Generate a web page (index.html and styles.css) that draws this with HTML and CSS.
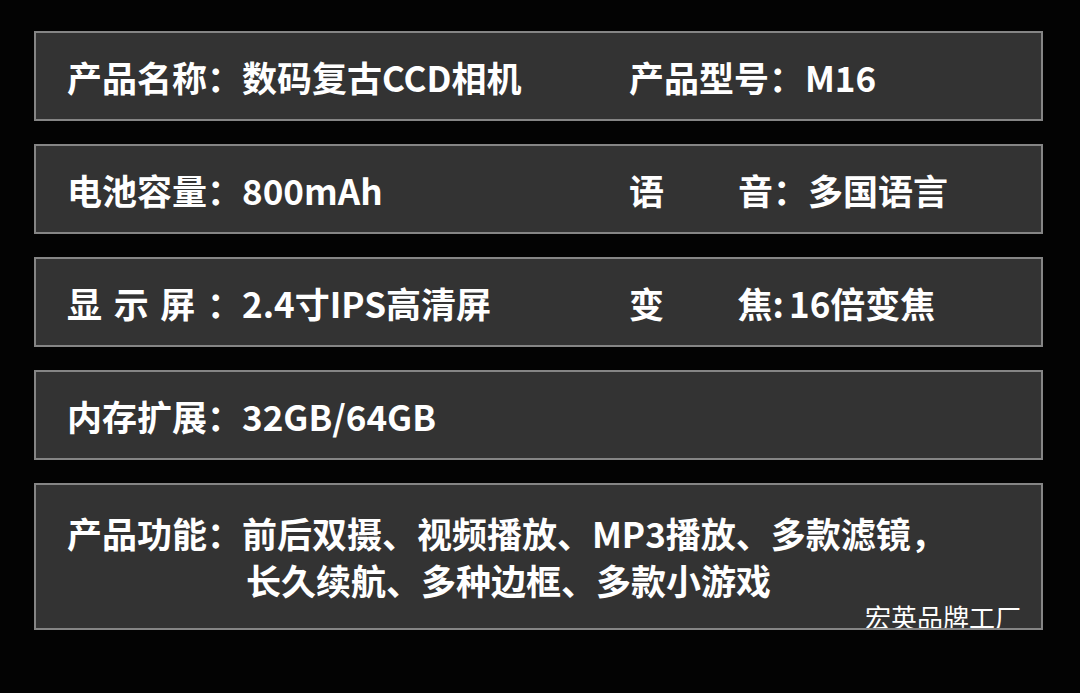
FILE: index.html
```html
<!DOCTYPE html>
<html>
<head>
    <meta charset="utf-8">
    <title>数码复古CCD相机 产品参数</title>
    <link rel="stylesheet" href="styles.css">
</head>
<body>
    <div class="spec-list">
        <div class="spec-row">
            <div class="cell cell-first">
                <span class="label">产品名称：</span>
                <span class="value">数码复古CCD相机</span>
            </div>
            <div class="cell">
                <span class="label">产品型号：</span>
                <span class="value value-latin">M16</span>
            </div>
        </div>

        <div class="spec-row">
            <div class="cell cell-first">
                <span class="label">电池容量：</span>
                <span class="value">800mAh</span>
            </div>
            <div class="cell">
                <span class="label label-split label-wide"><span>语</span><span>音：</span></span>
                <span class="value">多国语言</span>
            </div>
        </div>

        <div class="spec-row">
            <div class="cell cell-first">
                <span class="label label-spaced">显 示 屏 ：</span>
                <span class="value">2.4寸IPS高清屏</span>
            </div>
            <div class="cell">
                <span class="label label-split label-zoom"><span>变</span><span>焦:</span></span>
                <span class="value value-zoom">16倍变焦</span>
            </div>
        </div>

        <div class="spec-row">
            <div class="cell cell-first">
                <span class="label">内存扩展：</span>
                <span class="value">32GB/64GB</span>
            </div>
        </div>

        <div class="spec-row spec-row-tall">
            <div class="cell cell-multi">
                <span class="label">产品功能：</span>
                <div class="value">
                    <span class="line">前后双摄、视频播放、MP3播放、多款滤镜，</span>
                    <span class="line line-indent">长久续航、多种边框、多款小游戏</span>
                </div>
            </div>
            <div class="watermark">宏英品牌工厂</div>
        </div>
    </div>
</body>
</html>
```

FILE: styles.css
```css
body {
    margin: 0;
    padding: 0;
    background-color: #030303;
    font-family: "Noto Sans CJK SC", "Noto Sans", sans-serif;
    color: #ffffff;
}

.spec-list {
    display: flex;
    flex-direction: column;
    gap: 23px;
    padding: 31px 37px 0 34px;
}

.spec-row {
    position: relative;
    display: flex;
    align-items: center;
    height: 90px;
    box-sizing: border-box;
    padding-left: 31px;
    border: 2px solid #858585;
    background-color: #333333;
    overflow: hidden;
}

.spec-row-tall {
    height: 147px;
    align-items: flex-start;
    padding-top: 24px;
}

.cell {
    display: flex;
    align-items: center;
    font-size: 35px;
    font-weight: 700;
    line-height: 47px;
    white-space: nowrap;
}

.cell-first {
    width: 562px;
}

.cell-multi {
    align-items: flex-start;
}

.label {
    display: block;
    width: 175px;
    flex-shrink: 0;
}

.label-spaced {
    text-align: justify;
    text-align-last: justify;
}

.label-split {
    display: flex;
    justify-content: space-between;
}

.label-wide {
    width: 179px;
}

.label-zoom {
    width: 155px;
}

.value-latin {
    padding-left: 1px;
}

.value-zoom {
    padding-left: 5px;
}

.line {
    display: block;
}

.line-indent {
    padding-left: 4px;
}

.watermark {
    position: absolute;
    top: 119px;
    right: 20px;
    font-size: 26px;
    font-weight: 400;
    line-height: 26px;
    color: #ffffff;
}
```
